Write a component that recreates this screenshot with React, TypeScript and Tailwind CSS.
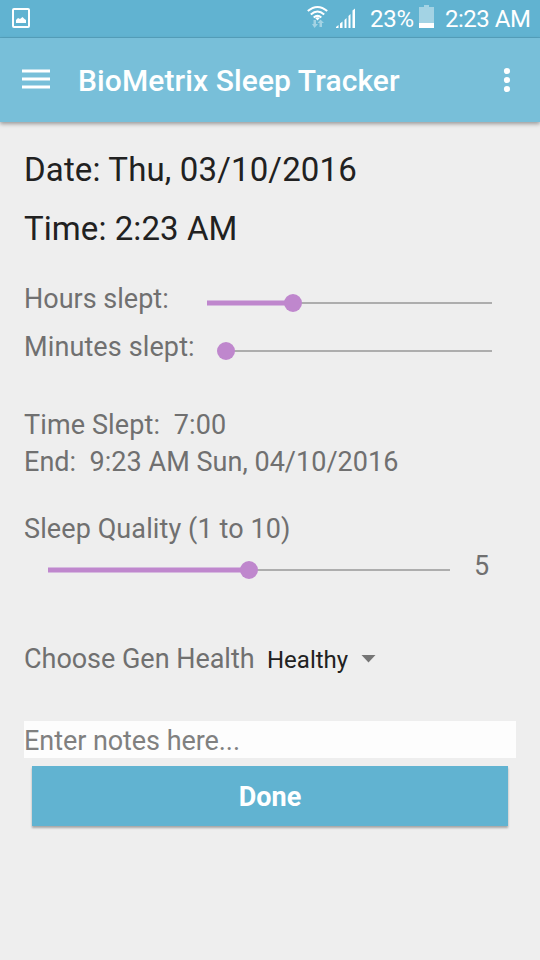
import React from "react";

type SliderProps = { fill: number; thumb: number; className: string };

function Slider({ fill, thumb, className }: SliderProps) {
  return (
    <div className={`relative h-[18px] ${className}`}>
      <div className="absolute top-2 right-0 h-0.5 bg-[#adadad]" style={{ left: thumb }} />
      <div
        className="absolute left-0 top-[6px] h-[6px] border-y border-[#d6b9df] bg-[#bf87cd]"
        style={{ width: fill }}
      />
      <div
        className="absolute top-0 size-[18px] rounded-full bg-[#bf87cd]"
        style={{ left: thumb - 9 }}
      />
    </div>
  );
}

function StatusBar() {
  return (
    <div className="flex h-[38px] items-start border-b border-[#57a3bf] bg-[#61b3d1] text-white">
      <svg className="ml-3 mt-2" width="18" height="20" viewBox="0 0 18 20">
        <rect x="1" y="1" width="16" height="18" rx="1" fill="none" stroke="#fff" strokeWidth="2" />
        <path d="M4 15V12L6 10L8 11L10.500 9L12.500 11L14 12V15Z" fill="#fff" />
      </svg>
      <svg className="ml-[277px] mt-[5px]" width="21" height="24" viewBox="0 0 21 24">
        <g fill="none" stroke="#fff" strokeWidth="2">
          <path d="M.8 6.100Q10.500-2.200 20.200 6.100" />
          <path d="M3.800 9.600Q10.500 3.500 17.200 9.600" />
          <path d="M6.700 12.600Q10.500 9.200 14.300 12.600" />
        </g>
        <path d="M8.200 13Q10.500 11.500 12.800 13L10.500 15.500Z" fill="#fff" />
        <path d="M6.500 15H9V19H11L7.500 23L5 19H6.500ZM12.500 22V18H10.500L13.500 14.500L17 18H15V22Z" fill="#a3d3e4" />
      </svg>
      <svg className="ml-[8px] mt-[8px]" width="20" height="20" viewBox="0 0 20 20" fill="#fff">
        <path d="M0 20V19L2.500 17V20ZM4 20V15.500L6.500 13.500V20ZM8.500 20V12L10.500 10V20ZM12.500 20V8L14.500 6V20ZM16.500 20V2.500L19 .5V20Z" />
      </svg>
      <span className="ml-[14px] mt-[3px] w-[44px] whitespace-nowrap text-[24px] leading-8 tracking-[-0.3px]">23%</span>
      <svg className="ml-[5px] mt-[5px]" width="15" height="23" viewBox="0 0 15 23">
        <path d="M0 2H5V0H10V2H15V18H0Z" fill="#a3d3e4" />
        <path d="M0 18H15V23H0Z" fill="#fff" />
      </svg>
      <span className="ml-[11px] mt-[3px] whitespace-nowrap text-[24px] leading-8 tracking-[-0.5px]">2:23 AM</span>
    </div>
  );
}

function AppBar() {
  return (
    <header className="relative flex h-[84px] items-center bg-[#78bfd9] text-white shadow-[0_2px_4px_rgba(0,0,0,0.35)]">
      <svg className="ml-[22px]" width="28" height="22" viewBox="0 0 28 22" fill="#fff">
        <path opacity=".5" d="M0 0H28V4H0ZM0 8H28V12H0ZM0 16H28V20H0Z" />
        <path d="M0 1H28V3H0ZM0 9H28V11H0ZM0 17H28V19H0Z" />
      </svg>
      <h1 className="ml-7 mt-0.5 whitespace-nowrap text-[30px] leading-9 font-medium tracking-[0.1px]">BioMetrix Sleep Tracker</h1>
      <svg className="ml-auto mr-[29px]" width="8" height="26" viewBox="0 0 8 26" fill="#fff">
        <circle cx="4" cy="4" r="3.100" />
        <circle cx="4" cy="13" r="3.100" />
        <circle cx="4" cy="22" r="3.100" />
      </svg>
    </header>
  );
}

export default function App() {
  return (
    <div className="h-[960px] w-[540px] overflow-hidden bg-[#eeeeee] font-['Roboto','Noto_Sans',sans-serif] text-[#707070]">
      <StatusBar />
      <AppBar />
      <main className="px-6 pt-7 text-[27px] leading-8 whitespace-nowrap">
        <div className="text-[33px] leading-10 text-[#212121]">
          <p className="tracking-[0.15px]">Date: Thu, 03/10/2016</p>
          <p className="mt-[19px] tracking-[0.07px]">Time: 2:23 AM</p>
        </div>
        <div className="mt-[34px] flex h-8">
          <span className="w-[183px]">Hours slept:</span>
          <Slider className="mt-[11px] w-[285px]" fill={86} thumb={86} />
        </div>
        <div className="mt-4 flex h-8">
          <span className="w-[193px] tracking-[0.12px]">Minutes slept:</span>
          <Slider className="mt-[11px] w-[275px]" fill={0} thumb={9} />
        </div>
        <p className="mt-[46px] whitespace-pre tracking-[0.12px]">{"Time Slept:  7:00"}</p>
        <p className="mt-[5px] whitespace-pre tracking-[0.03px]">{"End:  9:23 AM Sun, 04/10/2016"}</p>
        <p className="mt-[35px] tracking-[0.1px]">Sleep Quality (1 to 10)</p>
        <div className="mt-[5px] flex h-8 pl-6">
          <Slider className="mt-[11px] w-[402px]" fill={201} thumb={201} />
          <span className="ml-6">5</span>
        </div>
        <div className="mt-[61px] flex h-8 items-baseline">
          <span className="w-[243px] tracking-[-0.03px]">Choose Gen Health</span>
          <span className="text-[24px] text-[#212121]">Healthy</span>
          <svg className="ml-[13px] self-start mt-3" width="15" height="8" viewBox="0 0 15 8">
            <path d="M.5 0H14.500L7.500 7.500Z" fill="#757575" />
          </svg>
        </div>
        <div className="mt-[46px] h-[37px] bg-[#fdfdfd] pt-1 tracking-[-0.06px] text-[#808080]">Enter notes here...</div>
        <button className="mx-2 mt-2 flex h-[60px] w-[476px] items-center justify-center bg-[#61b3d1] pt-0.5 font-bold text-white shadow-[0_2px_2px_rgba(0,0,0,0.3)]">
          Done
        </button>
      </main>
    </div>
  );
}
